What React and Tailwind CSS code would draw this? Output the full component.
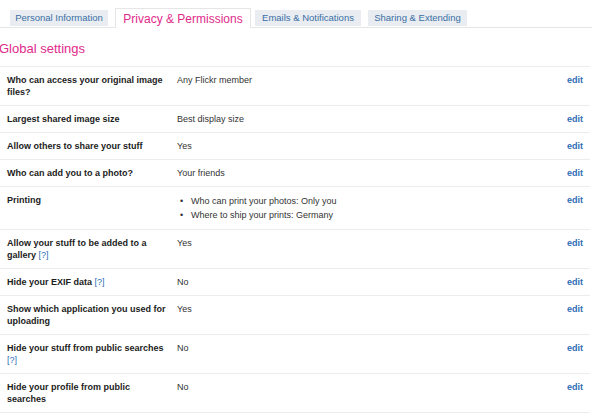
const ROWS = [
  { label: "Who can access your original image files?", value: "Any Flickr member" },
  { label: "Largest shared image size", value: "Best display size" },
  { label: "Allow others to share your stuff", value: "Yes" },
  { label: "Who can add you to a photo?", value: "Your friends" },
  {
    label: "Printing",
    list: ["Who can print your photos: Only you", "Where to ship your prints: Germany"],
  },
  { label: "Allow your stuff to be added to a gallery", help: true, value: "Yes" },
  { label: "Hide your EXIF data", help: true, value: "No" },
  { label: "Show which application you used for uploading", value: "Yes" },
  { label: "Hide your stuff from public searches", help: true, value: "No" },
  { label: "Hide your profile from public searches", value: "No" },
];

function Help() {
  return <span className="font-normal text-[#2f6db5]">[?]</span>;
}

export default function App() {
  return (
    <div
      className="w-[600px] h-[416px] overflow-hidden bg-white"
      style={{ fontFamily: '"Liberation Sans", Arial, sans-serif' }}
    >
      {/* tabs */}
      <div className="flex items-end w-[592px] pt-[8px] pl-[10px] border-b border-[#e6e6e6]">
        <div className="w-[98px] h-[16px] mb-[1px] flex items-center justify-center bg-[#e9edf1] text-[9.5px] text-[#3a6ea5]">
          Personal Information
        </div>
        <div className="ml-[7px] w-[136px] h-[20px] -mb-px flex items-center justify-center bg-white border border-b-0 border-[#e6e6e6] text-[12px] text-[#df2a8b]">
          Privacy &amp; Permissions
        </div>
        <div className="ml-[4px] w-[106px] h-[16px] mb-[1px] flex items-center justify-center bg-[#e9edf1] text-[9.5px] text-[#3a6ea5]">
          Emails &amp; Notifications
        </div>
        <div className="ml-[7px] w-[99px] h-[16px] mb-[1px] flex items-center justify-center bg-[#e9edf1] text-[9.5px] text-[#3a6ea5]">
          Sharing &amp; Extending
        </div>
      </div>

      <h2 className="pt-[12px] pb-[9px] leading-[17px] text-[13px] text-[#df2a8b] -ml-px">Global settings</h2>

      <div className="w-[590px] border-b border-[#ececec]">
        {ROWS.map((row) => (
          <div
            key={row.label}
            className="flex border-t border-[#ececec] pl-[7px] pr-[7px] pt-[7px] pb-[7px] text-[9px] leading-[12px]"
          >
            <div className="w-[170px] pr-[10px] shrink-0 font-bold text-[#1c1c1c]">
              {row.label}
              {row.help && (
                <>
                  {" "}
                  <Help />
                </>
              )}
            </div>
            <div className="flex-1 text-[#333]">
              {row.list ? (
                <div className="flex flex-col leading-[14px]">
                  {row.list.map((item) => (
                    <div key={item} className="flex">
                      <span className="w-[14px] pl-[3px]">•</span>
                      <span>{item}</span>
                    </div>
                  ))}
                </div>
              ) : (
                row.value
              )}
            </div>
            <a className="font-bold text-[#2f6db5]">edit</a>
          </div>
        ))}
      </div>
    </div>
  );
}
